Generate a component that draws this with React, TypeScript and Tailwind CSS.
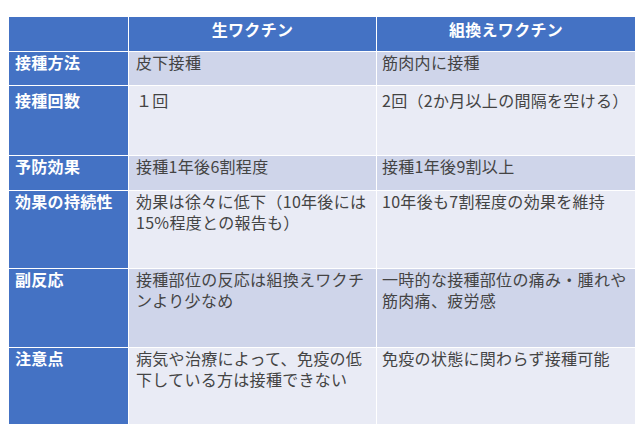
import React from 'react';

interface Row {
  label: string;
  live: React.ReactNode;
  recombinant: React.ReactNode;
  tone: 'dark' | 'light';
  pad?: string;
}

const rows: Row[] = [
  { label: '接種方法', live: '皮下接種', recombinant: '筋肉内に接種', tone: 'dark' },
  { label: '接種回数', live: '１回', recombinant: '2回（2か月以上の間隔を空ける）', tone: 'light', pad: 'pt-[4px]' },
  { label: '予防効果', live: '接種1年後6割程度', recombinant: '接種1年後9割以上', tone: 'dark' },
  {
    label: '効果の持続性',
    live: (
      <>
        効果は徐々に低下（10年後には
        <br />
        15%程度との報告も）
      </>
    ),
    recombinant: '10年後も7割程度の効果を維持',
    tone: 'light',
  },
  {
    label: '副反応',
    live: (
      <>
        接種部位の反応は組換えワクチ
        <br />
        ンより少なめ
      </>
    ),
    recombinant: (
      <>
        一時的な接種部位の痛み・腫れや
        <br />
        筋肉痛、疲労感
      </>
    ),
    tone: 'dark',
  },
  {
    label: '注意点',
    live: (
      <>
        病気や治療によって、免疫の低
        <br />
        下している方は接種できない
      </>
    ),
    recombinant: '免疫の状態に関わらず接種可能',
    tone: 'light',
  },
];

const App: React.FC = () => {
  return (
    <div
      className="w-[640px] h-[431px] bg-white pt-[17px] pl-[9px] overflow-hidden"
      style={{ fontFamily: '"Noto Sans CJK JP", "Noto Sans", sans-serif' }}
    >
      <div className="grid grid-cols-[119px_247px_258px] grid-rows-[34px_33px_69px_34px_77px_78px_76px] gap-x-px gap-y-px bg-white w-[626px]">
        {/* header */}
        <div className="bg-[#4472c4]" />
        <div className="bg-[#4472c4] text-white font-bold text-[16px] leading-[20px] text-center pt-[2px] tracking-[0.3px]">
          生ワクチン
        </div>
        <div className="bg-[#4472c4] text-white font-bold text-[16px] leading-[20px] text-center pt-[2px] tracking-[0.3px]">
          組換えワクチン
        </div>

        {rows.map((row) => {
          const bg = row.tone === 'dark' ? 'bg-[#cfd5ea]' : 'bg-[#e9ebf5]';
          const pad = row.pad ?? 'pt-0';
          return (
            <React.Fragment key={row.label}>
              <div className={`bg-[#4472c4] text-white font-bold text-[16px] leading-[20px] pl-[6px] tracking-[0.3px] ${pad}`}>
                {row.label}
              </div>
              <div className={`${bg} text-[#444444] text-[16px] leading-[21px] pl-[7px] whitespace-nowrap tracking-[0.3px] ${pad}`}>
                {row.live}
              </div>
              <div className={`${bg} text-[#444444] text-[16px] leading-[21px] pl-[5px] whitespace-nowrap tracking-[0.3px] ${pad}`}>
                {row.recombinant}
              </div>
            </React.Fragment>
          );
        })}
      </div>
    </div>
  );
};

export default App;
